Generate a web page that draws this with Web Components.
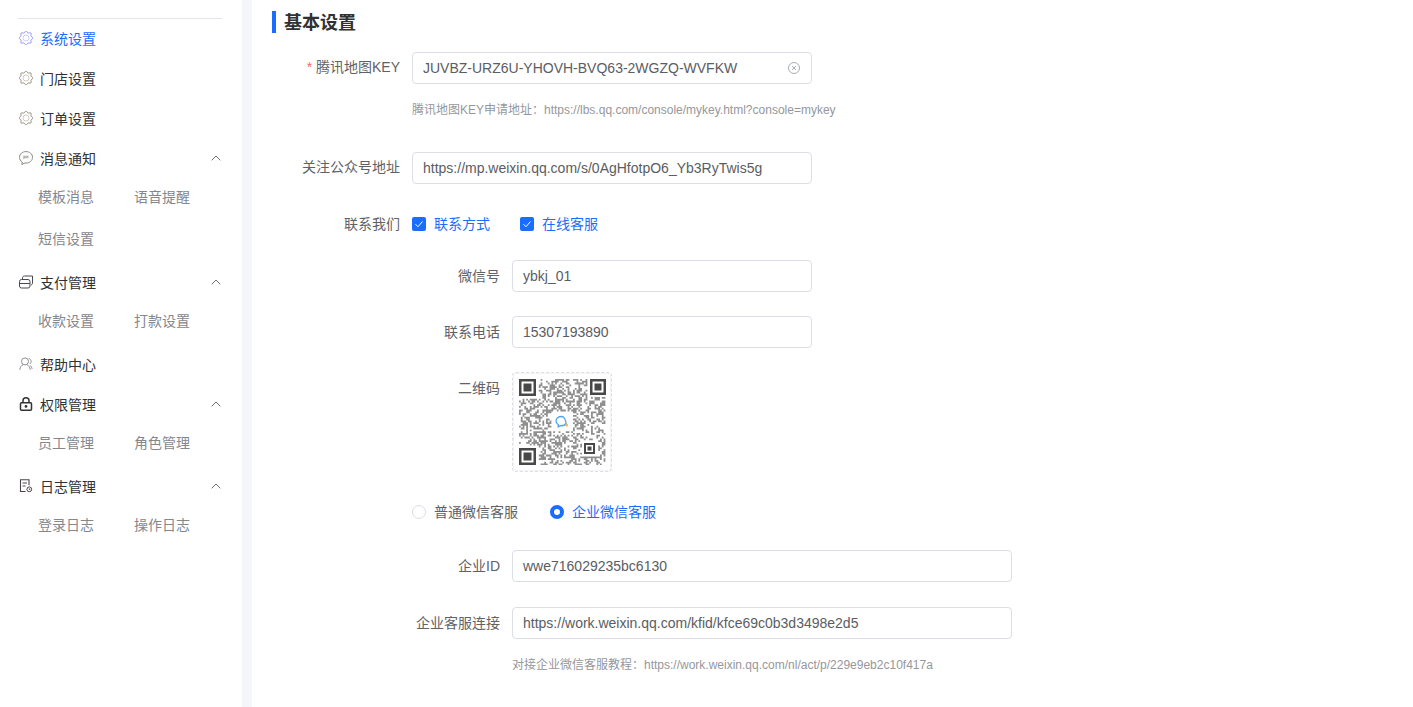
<!DOCTYPE html>
<html lang="zh-CN">
<head>
<meta charset="utf-8">
<title>基本设置</title>
<style>
    html, body { margin: 0; height: 100%; overflow: hidden; background: #fff; }
    body {
        font-family: "Liberation Sans", "Noto Sans CJK SC", sans-serif;
        font-size: 14px;
        color: #303133;
    }
</style>
</head>
<body>
<app-shell>
    <app-sidebar slot="side">
        <nav-item icon="gear" active>系统设置</nav-item>
        <nav-item icon="gear">门店设置</nav-item>
        <nav-item icon="gear">订单设置</nav-item>
        <nav-item icon="chat" open>消息通知</nav-item>
        <sub-menu><span>模板消息</span><span>语音提醒</span><span>短信设置</span></sub-menu>
        <nav-item icon="card" open>支付管理</nav-item>
        <sub-menu><span>收款设置</span><span>打款设置</span></sub-menu>
        <nav-item icon="user">帮助中心</nav-item>
        <nav-item icon="lock" open>权限管理</nav-item>
        <sub-menu><span>员工管理</span><span>角色管理</span></sub-menu>
        <nav-item icon="log" open>日志管理</nav-item>
        <sub-menu><span>登录日志</span><span>操作日志</span></sub-menu>
    </app-sidebar>
    <settings-form>
        <section-title>基本设置</section-title>

        <form-row label="腾讯地图KEY" required gap="34">
            <text-field value="JUVBZ-URZ6U-YHOVH-BVQ63-2WGZQ-WVFKW" clearable></text-field>
            <hint-text>腾讯地图KEY申请地址：https://lbs.qq.com/console/mykey.html?console=mykey</hint-text>
        </form-row>
        <form-row label="关注公众号地址" gap="25">
            <text-field value="https://mp.weixin.qq.com/s/0AgHfotpO6_Yb3RyTwis5g"></text-field>
        </form-row>
        <form-row label="联系我们" gap="21">
            <choice-group>
                <check-box>联系方式</check-box>
                <check-box>在线客服</check-box>
            </choice-group>
        </form-row>
        <form-row label="微信号" indent gap="24">
            <text-field value="ybkj_01" size="300"></text-field>
        </form-row>
        <form-row label="联系电话" indent gap="24">
            <text-field value="15307193890" size="300"></text-field>
        </form-row>
        <form-row label="二维码" indent gap="25">
            <qr-code></qr-code>
        </form-row>
        <form-row gap="25">
            <choice-group wide>
                <radio-box>普通微信客服</radio-box>
                <radio-box checked>企业微信客服</radio-box>
            </choice-group>
        </form-row>
        <form-row label="企业ID" indent gap="25">
            <text-field value="wwe716029235bc6130" size="500"></text-field>
        </form-row>
        <form-row label="企业客服连接" indent gap="0">
            <text-field value="https://work.weixin.qq.com/kfid/kfce69c0b3d3498e2d5" size="500"></text-field>
            <hint-text>对接企业微信客服教程：https://work.weixin.qq.com/nl/act/p/229e9eb2c10f417a</hint-text>
        </form-row>
    </settings-form>
</app-shell>

<script>
// scalloped ring, 8 teeth
function gearPath() {
    const pts = [];
    for (let i = 0; i < 96; i++) {
        const a = i / 96 * Math.PI * 2;
        const r = 6.1 + 0.8 * Math.cos(a * 8);
        pts.push((7 + r * Math.sin(a)).toFixed(2) + ' ' + (7 - r * Math.cos(a)).toFixed(2));
    }
    return 'M' + pts.join('L') + 'z';
}

const ICONS = {
    gear: `<path d="${gearPath()}"/><circle cx="7" cy="7" r="3" opacity=".4"/>`,
    chat: `<path d="M7 .6C3.300.6.5 3.100.5 6.300c0 2 1.100 3.700 2.800 4.700l-.5 2.500 3-1.500c.4.100.8.100 1.200.100 3.700 0 6.500-2.500 6.500-5.800S10.700.6 7 .6z"/><path d="M4.200 4.800h5.300v2.400H6L4.200 8.500z" fill="currentColor" stroke="none" opacity=".6"/>`,
    card: `<rect x=".5" y="4.500" width="10.500" height="8.500" rx="2"/><path d="M.5 8.500H11M3.500 4.500V3c0-1.200.8-2 2-2H13.500v7c0 1-.7 1.800-1.500 2"/>`,
    user: `<circle cx="6" cy="4.400" r="3.500"/><path d="M.8 12.800c.3-2.800 1.800-4.500 3.400-5.200M7.800 7.600c1.600.7 3.100 2.400 3.400 5.200M9.800 1.300c1.500.6 2.300 1.800 2.300 3.100 0 1-.5 1.900-1.200 2.500M11 8.300c1.100.8 1.900 2.200 2.200 3.700"/>`,
    lock: `<rect x="1.500" y="5.700" width="11" height="7.500" rx="1" stroke-width="1.500"/><path d="M4 5.700V3.700C4 2 5.300.8 7 .8S10 2 10 3.700v2" stroke-width="1.500"/><circle cx="7" cy="9.400" r="1.400" fill="currentColor" stroke="none"/>`,
    log: `<path d="M6.500 12.500H1.500V.8h8.500v5.500M3.500 4h4.500M3.500 7h3" stroke-width="1.100"/><circle cx="10.300" cy="10.300" r="2.400"/><path d="M10.300 9.400v1h1"/>`
};

// plain shadow element: template string in, nothing else
function define(name, css, html) {
    customElements.define(name, class extends HTMLElement {
        constructor() {
            super();
            this.attachShadow({ mode: 'open' });
            this.shadowRoot.innerHTML = `<style>${css}</style>${html}`;
        }
    });
}

define('app-shell', `
    :host { display: flex; height: 707px; }
    .gutter { width: 10px; background: #f5f6fa; flex: none; }
    .main { flex: 1; min-width: 0; }
`, `<slot name="side"></slot><div class="gutter"></div><div class="main"><slot></slot></div>`);

define('app-sidebar', `
    :host { display: block; width: 242px; box-sizing: border-box; padding: 18px 20px 0 18px; }
    hr { border: 0; height: 1px; background: #e3e4ee; margin: 0 0 -1px; }
`, `<hr><slot></slot>`);

class NavItem extends HTMLElement {
    connectedCallback() {
        const active = this.hasAttribute('active');
        const iconName = this.getAttribute('icon');
        const iconColor = { gear: active ? '#8f8cf5' : '#8d8578', chat: '#8a8a84', card: '#4a4a4e', user: '#8f8f95', lock: '#333', log: '#4c4450' }[iconName];
        this.attachShadow({ mode: 'open' });
        this.shadowRoot.innerHTML = `
            <style>
                :host { display: flex; align-items: center; height: 40px; color: ${active ? '#1a6dff' : '#303133'}; }
                svg.icon { width: 14px; height: 14px; margin: 0 7px 0 1px; flex: none; fill: none; stroke: currentColor; stroke-width: 1; color: ${iconColor}; }
                .text { flex: 1; }
                svg.arrow { width: 10px; height: 6px; fill: none; stroke: #707070; stroke-width: 1; margin-right: 1px; }
            </style>
            <svg class="icon" viewBox="0 0 14 14">${ICONS[iconName]}</svg>
            <span class="text"><slot></slot></span>
            ${this.hasAttribute('open') ? '<svg class="arrow" viewBox="0 0 10 6"><path d="M.7 5.300 5 1l4.300 4.300"/></svg>' : ''}
        `;
    }
}
customElements.define('nav-item', NavItem);

define('sub-menu', `
    :host { display: grid; grid-template-columns: 96px 96px; grid-auto-rows: 36px; row-gap: 6px; align-items: center; padding: 0 0 6px 20px; color: #84878e; }
`, `<slot></slot>`);

define('settings-form', `
    :host { display: block; padding: 11px 0 0 20px; }
`, `<slot></slot>`);

define('section-title', `
    :host { display: flex; align-items: center; box-sizing: border-box; height: 22px; margin-bottom: 19px; padding: 0 0 2px 8px; font-size: 18px; font-weight: 700; color: #303133; border-left: 4px solid #1a6dff; }
`, `<slot></slot>`);

class FormRow extends HTMLElement {
    connectedCallback() {
        const label = this.getAttribute('label') || '';
        const star = this.hasAttribute('required') ? '<i>*</i> ' : '';
        // indented rows sit one level in: label ends at 500 rather than 400
        const indent = this.hasAttribute('indent');
        this.attachShadow({ mode: 'open' });
        this.shadowRoot.innerHTML = `
            <style>
                :host { display: flex; margin-bottom: ${this.getAttribute('gap') || 0}px; }
                .label { width: ${indent ? 240 : 140}px; flex: none; box-sizing: border-box; padding-right: 12px; text-align: right; line-height: ${indent ? 32 : 30}px; color: #5f6267; white-space: nowrap; }
                .label i { font-style: normal; color: #f56c6c; }
                .body { min-width: 0; }
            </style>
            <div class="label">${star}${label}</div>
            <div class="body"><slot></slot></div>
        `;
    }
}
customElements.define('form-row', FormRow);

class TextField extends HTMLElement {
    connectedCallback() {
        const width = this.getAttribute('size') || 400;
        const clear = this.hasAttribute('clearable')
            ? `<svg viewBox="0 0 12 12"><circle cx="6" cy="6" r="5.500"/><path d="M4 4l4 4M8 4l-4 4"/></svg>` : '';
        this.attachShadow({ mode: 'open' });
        this.shadowRoot.innerHTML = `
            <style>
                :host { display: block; width: ${width}px; }
                .box { display: flex; align-items: center; height: 32px; box-sizing: border-box; padding: 0 11px 0 10px; border: 1px solid #dcdee6; border-radius: 4px; background: #fff; color: #5a5d63; font-size: 14px; white-space: nowrap; }
                .value { flex: 1; }
                svg { width: 12px; height: 12px; fill: none; stroke: #a9abb2; stroke-width: 1; }
            </style>
            <div class="box"><span class="value">${this.getAttribute('value')}</span>${clear}</div>
        `;
    }
}
customElements.define('text-field', TextField);

define('hint-text', `
    :host { display: block; margin-top: 18px; font-size: 12px; line-height: 16px; color: #95979c; white-space: nowrap; }
`, `<slot></slot>`);

class ChoiceGroup extends HTMLElement {
    connectedCallback() {
        this.attachShadow({ mode: 'open' });
        this.shadowRoot.innerHTML = `
            <style>
                :host { display: flex; align-items: center; height: 28px; gap: ${this.hasAttribute('wide') ? 32 : 30}px; }
            </style>
            <slot></slot>
        `;
    }
}
customElements.define('choice-group', ChoiceGroup);

define('check-box', `
    :host { display: inline-flex; align-items: center; gap: 8px; color: #1a6dff; }
    .mark { width: 14px; height: 14px; margin-top: 2px; border-radius: 2px; background: #1a6dff; display: flex; align-items: center; justify-content: center; }
    svg { width: 10px; height: 10px; fill: none; stroke: #fff; stroke-width: 1; }
`, `<span class="mark"><svg viewBox="0 0 10 10"><path d="M1.500 5.200 4 7.700 8.500 2.500"/></svg></span><span><slot></slot></span>`);

class RadioBox extends HTMLElement {
    connectedCallback() {
        const on = this.hasAttribute('checked');
        this.attachShadow({ mode: 'open' });
        this.shadowRoot.innerHTML = `
            <style>
                :host { display: inline-flex; align-items: center; gap: 8px; color: ${on ? '#1a6dff' : '#606266'}; }
                .mark { width: 14px; height: 14px; margin-top: 2px; box-sizing: border-box; border-radius: 50%; border: ${on ? '4px solid #1a6dff' : '1px solid #dcdee6'}; background: #fff; }
            </style>
            <span class="mark"></span><span><slot></slot></span>
        `;
    }
}
customElements.define('radio-box', RadioBox);

class QrCode extends HTMLElement {
    connectedCallback() {
        const W = 87, H = 86, m = 1.8;
        let seed = 20417;
        const rnd = () => (seed = (seed * 16807) % 2147483647) / 2147483647;
        const blocks = [[0, 0, 19, 19], [69, 0, 18, 18], [0, 67, 19, 19], [63, 62, 15, 15], [34, 34, 19, 18]];
        const free = (x, y) => !blocks.some(b => x + m > b[0] && x < b[0] + b[2] && y + m > b[1] && y < b[1] + b[3]);
        let modules = '';
        for (let y = 0; y < H - 1; y += m) {
            for (let x = 0; x < W - 1; x += m) {
                if (free(x, y) && rnd() > 0.54) modules += `M${x.toFixed(1)} ${y.toFixed(1)}h${m}v${m}h-${m}z`;
            }
        }
        // ring + centre, sizes in px
        const finder = (x, y, n, ring, dot) => {
            const i = (n - dot) / 2;
            return `<path fill-rule="evenodd" d="M${x} ${y}h${n}v${n}h-${n}zM${x + ring} ${y + ring}v${n - ring * 2}h${n - ring * 2}v-${n - ring * 2}z"/><rect x="${x + i}" y="${y + i}" width="${dot}" height="${dot}"/>`;
        };
        this.attachShadow({ mode: 'open' });
        this.shadowRoot.innerHTML = `
            <style>
                :host { display: block; width: 100px; height: 100px; box-sizing: border-box; padding: 6px; border: 1px dashed #dcdee6; border-radius: 4px; box-shadow: inset 0 0 0 1px #f4f4f6; }
                svg { display: block; width: ${W}px; height: ${H}px; filter: blur(.4px); }
            </style>
            <svg viewBox="0 0 ${W} ${H}">
                <path d="${modules}" fill="#555" opacity=".66"/>
                <g fill="#484848">
                    ${finder(0, 0, 17, 2.500, 8)}${finder(71, 0, 16, 2.500, 7)}${finder(0, 69, 17, 2.500, 8)}${finder(65, 64, 11, 2, 4)}
                </g>
                <path d="M42.500 37.500c-3.200 0-5.500 2-5.500 4.600 0 1.700 1 3 2.400 3.800l-.2 2 2.300-1.200c2.500.2 4.500-.6 5.600-2.400-.4-3.900-2.400-6.800-4.600-6.800z" fill="none" stroke="#4aa3ee" stroke-width="1.300"/>
                <circle cx="47.500" cy="46" r="1.500" fill="#e9b44c"/>
            </svg>
        `;
    }
}
customElements.define('qr-code', QrCode);
</script>
</body>
</html>
